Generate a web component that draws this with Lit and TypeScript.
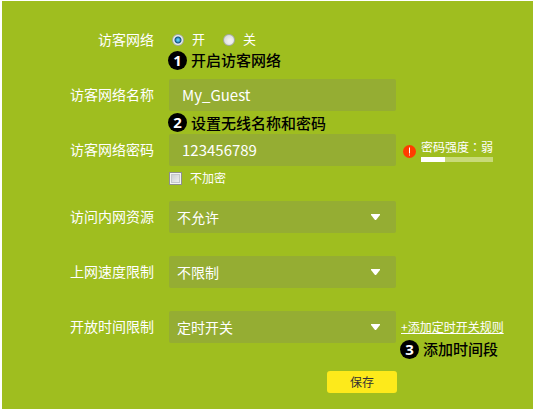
import { LitElement, html, css } from "lit";
import { customElement, property } from "lit/decorators.js";

@customElement("step-hint")
class StepHint extends LitElement {
  @property({ type: Number }) step = 1;
  @property() text = "";

  static styles = css`
    :host {
      display: flex;
      align-items: center;
      gap: 4px;
      color: #000;
      font-size: 15px;
      font-weight: 500;
      line-height: 20px;
      white-space: nowrap;
    }
    .num {
      width: 19px;
      height: 19px;
      border-radius: 50%;
      background: #000;
      color: #fff;
      font-family: "Noto Sans", sans-serif;
      font-size: 15px;
      font-weight: 700;
      line-height: 18px;
      text-align: center;
    }
  `;

  render() {
    return html`<span class="num">${this.step}</span><span>${this.text}</span>`;
  }
}

@customElement("app-root")
class AppRoot extends LitElement {
  static styles = css`
    :host {
      display: block;
      padding: 1px 2px 2px;
      background: #fff;
      color: #fff;
      font-family: "Noto Sans CJK SC", sans-serif;
      font-size: 14px;
    }
    * {
      box-sizing: border-box;
    }
    .panel {
      display: block;
      background: #9fbe1f;
      padding: 29px 0 16px;
    }
    .row {
      display: grid;
      grid-template-columns: 152px 15px minmax(160px, 227px) 1fr;
      align-items: start;
    }
    .row + .row {
      margin-top: 23px;
    }
    .label {
      grid-column: 1;
      text-align: right;
      line-height: 30px;
      white-space: nowrap;
    }
    .field {
      grid-column: 3;
      position: relative;
      min-width: 0;
    }
    .aside {
      grid-column: 4;
      padding-left: 5px;
    }
    .short .label {
      line-height: 18px;
    }
    .radios {
      display: flex;
      align-items: center;
      gap: 18px;
      height: 20px;
      padding-left: 3px;
    }
    .option {
      display: flex;
      align-items: center;
      gap: 8px;
      font-size: 13px;
      line-height: 20px;
    }
    .caption {
      padding-bottom: 2px;
    }
    .radio,
    .check {
      appearance: none;
      flex: none;
      margin: 0;
    }
    .radio {
      width: 12px;
      height: 12px;
      border: 1px solid #a3a9a5;
      border-radius: 50%;
      background: radial-gradient(circle at 60% 60%, #f0f0f0 20%, #ccd0d1 100%);
    }
    .radio:checked {
      background: radial-gradient(circle, #58c8f4 0 1px, #14547c 3px, #e8eef0 4px);
    }
    .check {
      width: 13px;
      height: 13px;
      border: 1px solid #8e8f8f;
      background: linear-gradient(135deg, #c5c9cd, #f6f6f6);
      box-shadow: inset 0 0 0 1px #f4f4f4, inset 0 0 0 2px #c4c8cc;
    }
    .hint {
      margin-left: 166px;
    }
    .hint.first {
      height: 20px;
      margin-bottom: 9px;
    }
    .hint.second {
      height: 23px;
    }
    .input,
    .select {
      appearance: none;
      display: block;
      width: 100%;
      height: 32px;
      margin: 0;
      border: 0;
      border-radius: 2px;
      background: #95ad33;
      color: #fff;
      font-family: inherit;
    }
    .input {
      padding: 0 13px 2px;
      font-size: 15px;
    }
    .select {
      padding: 0 30px 0 8px;
      font-size: 14px;
    }
    .arrow {
      position: absolute;
      right: 16px;
      top: 13px;
      display: block;
      pointer-events: none;
    }
    .encrypt {
      display: flex;
      align-items: center;
      gap: 8px;
      height: 25px;
      margin: 0 0 10px 167px;
      font-size: 12px;
    }
    .strength {
      display: flex;
      align-items: center;
      gap: 5px;
      padding: 4px 0 0 7px;
      font-size: 12px;
      line-height: 18px;
      white-space: nowrap;
    }
    .colon {
      font-family: "Noto Sans CJK TC", sans-serif;
    }
    .alert {
      display: block;
      margin-top: 2px;
    }
    .meter {
      height: 5px;
      margin-top: 1px;
      background: #c8da78;
    }
    .bar {
      height: 100%;
      background: #fff;
    }
    .link {
      display: block;
      color: #fff;
      font-size: 12px;
      line-height: 18px;
      white-space: nowrap;
      text-decoration: underline;
      text-decoration-thickness: 1px;
      text-decoration-skip-ink: none;
      text-underline-offset: 1px;
    }
    .schedule {
      padding-top: 7px;
    }
    .schedule step-hint {
      margin: 3px 0 0 -1px;
      height: 20px;
    }
    .actions {
      display: grid;
      grid-template-columns: minmax(327px, 395px) 1fr;
      margin-top: 12px;
    }
    .save {
      justify-self: end;
      width: 70px;
      height: 22px;
      padding: 0;
      border: 0;
      border-radius: 3px;
      background: #fdea1b;
      color: #333;
      font-family: inherit;
      font-size: 12px;
      line-height: 22px;
    }
  `;

  private strength = 1 / 3;

  private selectRow(id: string, label: string, value: string, aside: unknown = null) {
    return html`
      <div class="row">
        <label class="label" for=${id}>${label}</label>
        <div class="field">
          <select class="select" id=${id}>
            <option>${value}</option>
          </select>
          <svg class="arrow" width="9" height="6" viewBox="0 0 9 6" aria-hidden="true">
            <path d="M0 0h9v1L5 6H4L0 1z" fill="#fff" />
          </svg>
        </div>
        ${aside}
      </div>
    `;
  }

  render() {
    return html`
      <form class="panel" @submit=${(e: Event) => e.preventDefault()}>
        <div class="row short" role="radiogroup" aria-labelledby="guest">
          <span class="label" id="guest">访客网络</span>
          <div class="field radios">
            <label class="option"><input class="radio" type="radio" name="guest" checked /><span class="caption">开</span></label>
            <label class="option"><input class="radio" type="radio" name="guest" /><span class="caption">关</span></label>
          </div>
        </div>
        <step-hint class="hint first" step="1" text="开启访客网络"></step-hint>

        <div class="row">
          <label class="label" for="name">访客网络名称</label>
          <div class="field"><input class="input" id="name" type="text" value="My_Guest" /></div>
        </div>
        <step-hint class="hint second" step="2" text="设置无线名称和密码"></step-hint>

        <div class="row">
          <label class="label" for="password">访客网络密码</label>
          <div class="field"><input class="input" id="password" type="text" value="123456789" /></div>
          <div class="aside strength">
            <svg class="alert" width="13" height="13" viewBox="0 0 13 13" aria-hidden="true">
              <circle cx="6.5" cy="6.5" r="6.5" fill="#ff3c00" />
              <path d="M6 2.5h1v6H6zM6 9.5h1v1H6z" fill="#fff" />
            </svg>
            <div>
              <div>密码强度<span class="colon" lang="zh-TW">：</span>弱</div>
              <div class="meter"><div class="bar" style="width:${this.strength * 100}%"></div></div>
            </div>
          </div>
        </div>
        <label class="encrypt"><input class="check" type="checkbox" /><span class="caption">不加密</span></label>

        ${this.selectRow("lan", "访问内网资源", "不允许")}
        ${this.selectRow("speed", "上网速度限制", "不限制")}
        ${this.selectRow(
          "time",
          "开放时间限制",
          "定时开关",
          html`<div class="aside schedule">
            <a class="link" href="#">+添加定时开关规则</a>
            <step-hint step="3" text="添加时间段"></step-hint>
          </div>`
        )}
        <div class="actions"><button class="save" type="submit">保存</button></div>
      </form>
    `;
  }
}
